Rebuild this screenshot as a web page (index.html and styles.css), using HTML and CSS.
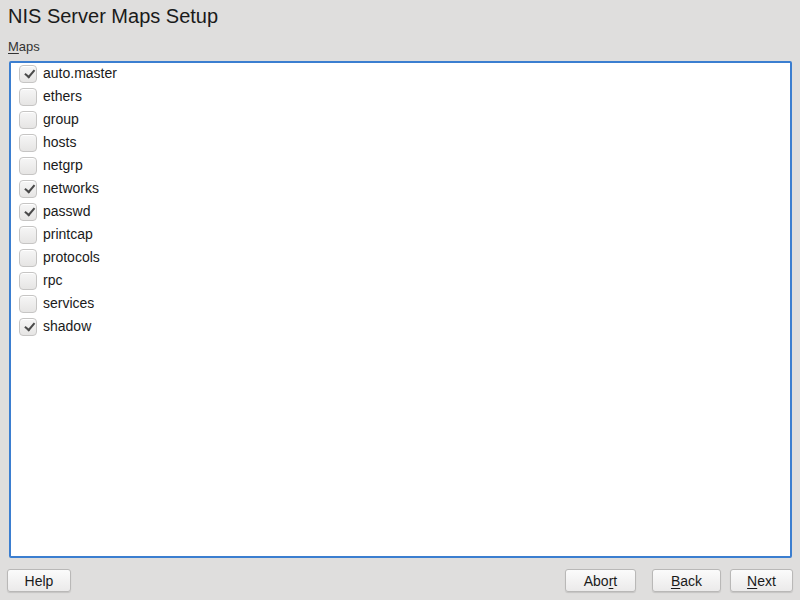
FILE: index.html
```html
<!DOCTYPE html>
<html>
<head>
<meta charset="utf-8">
<link rel="stylesheet" href="styles.css">
</head>
<body>
<div class="dialog">
  <h1 class="title">NIS Server Maps Setup</h1>
  <div class="label"><u>M</u>aps</div>
  <ul class="list">
    <li class="row"><span class="cb on"></span>auto.master</li>
    <li class="row"><span class="cb"></span>ethers</li>
    <li class="row"><span class="cb"></span>group</li>
    <li class="row"><span class="cb"></span>hosts</li>
    <li class="row"><span class="cb"></span>netgrp</li>
    <li class="row"><span class="cb on"></span>networks</li>
    <li class="row"><span class="cb on"></span>passwd</li>
    <li class="row"><span class="cb"></span>printcap</li>
    <li class="row"><span class="cb"></span>protocols</li>
    <li class="row"><span class="cb"></span>rpc</li>
    <li class="row"><span class="cb"></span>services</li>
    <li class="row"><span class="cb on"></span>shadow</li>
  </ul>
  <div class="buttons">
    <button class="btn help">Help</button>
    <div class="spacer"></div>
    <button class="btn abort">Abo<u>r</u>t</button>
    <button class="btn back"><u>B</u>ack</button>
    <button class="btn next"><u>N</u>ext</button>
  </div>
</div>
</body>
</html>
```
FILE: styles.css
```css
html, body {
  margin: 0;
  padding: 0;
  background: #dfdedd;
}
body {
  font-family: "Liberation Sans", Arial, sans-serif;
  color: #1a1a1a;
  font-size: 14px;
}
.dialog {
  width: 800px;
  height: 600px;
  display: flex;
  flex-direction: column;
  box-sizing: border-box;
}
.title {
  margin: 0;
  padding: 5px 0 0 8px;
  font-size: 20px;
  font-weight: normal;
  line-height: 23px;
  color: #1a1a1a;
}
.label {
  padding: 11px 0 0 8px;
  font-size: 13px;
  line-height: 16px;
  color: #333;
}
.label u {
  text-decoration-thickness: 1px;
  text-underline-offset: 2px;
}
.list {
  list-style: none;
  margin: 6px 8px 0 9px;
  padding: 0;
  height: 493px;
  border: 2px solid #3b7ed0;
  border-radius: 2px;
  background: #ffffff;
}
.row {
  height: 23px;
  box-sizing: border-box;
  padding: 0 0 3px 8px;
  display: flex;
  align-items: center;
  font-size: 14px;
  color: #1a1a1a;
}
.cb {
  width: 16px;
  height: 16px;
  border: 1px solid #c6c5c4;
  border-radius: 4px;
  background: linear-gradient(#f6f6f6, #e6e5e4);
  margin: 2px 6px 0 0;
  position: relative;
  box-shadow: inset 0 1px 0 #ffffff;
}
.cb.on::after {
  content: "";
  position: absolute;
  left: 4px;
  top: 3px;
  width: 8px;
  height: 4px;
  border-left: 2px solid #4a4a4a;
  border-bottom: 2px solid #4a4a4a;
  transform: rotate(-50deg) translate(0px, 1px);
  transform-origin: center;
}
.buttons {
  display: flex;
  align-items: center;
  padding: 11px 7px 0 7px;
}
.spacer {
  flex: 1;
}
.btn {
  font-family: "Liberation Sans", Arial, sans-serif;
  font-size: 14px;
  color: #1a1a1a;
  height: 23px;
  padding: 0;
  border: 1px solid #b9b8b7;
  border-radius: 3px;
  background: linear-gradient(#fbfbfb, #ebeaea);
  box-shadow: 0 1px 1px rgba(0, 0, 0, 0.12);
}
.btn u {
  text-decoration-thickness: 1px;
  text-underline-offset: 2px;
}
.help { width: 64px; }
.abort { width: 71px; }
.back { width: 69px; margin-left: 16px; }
.next { width: 63px; margin-left: 9px; }
```
